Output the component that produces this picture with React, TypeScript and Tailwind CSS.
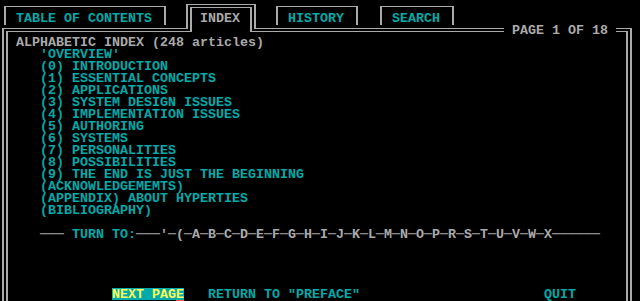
import React from 'react';

const LINE = 'border-[#aaaaaa]';
// text cell: 12px tall, glyphs pushed down to sit like the 8x12 DOS font
const CELL = 'h-[12px] pt-[2px] leading-[10px]';

const INDEX_ITEMS = [
  "'OVERVIEW'",
  '(0) INTRODUCTION',
  '(1) ESSENTIAL CONCEPTS',
  '(2) APPLICATIONS',
  '(3) SYSTEM DESIGN ISSUES',
  '(4) IMPLEMENTATION ISSUES',
  '(5) AUTHORING',
  '(6) SYSTEMS',
  '(7) PERSONALITIES',
  '(8) POSSIBILITIES',
  '(9) THE END IS JUST THE BEGINNING',
  '(ACKNOWLEDGEMEMTS)',
  '(APPENDIX) ABOUT HYPERTIES',
  '(BIBLIOGRAPHY)',
];

const LETTERS = 'ABCDEFGHIJKLMNOPRSTUVWX'.split('');

// every item sits on the 80x25 text-mode grid (8x12 cells)
const rowClass = [
  'row-[5/6]', 'row-[6/7]', 'row-[7/8]', 'row-[8/9]', 'row-[9/10]', 'row-[10/11]', 'row-[11/12]',
  'row-[12/13]', 'row-[13/14]', 'row-[14/15]', 'row-[15/16]', 'row-[16/17]', 'row-[17/18]', 'row-[18/19]',
];

const App = () => {
  const turnTo = "───'─(─" + LETTERS.join('─') + '──────';

  return (
    <div
      className="w-[640px] h-[301px] bg-black overflow-hidden grid grid-cols-[repeat(80,8px)] grid-rows-[repeat(24,12px)_13px] text-[13.333px] leading-[12px] font-bold whitespace-pre text-[#00aaaa]"
      style={{ fontFamily: '"Liberation Mono", "DejaVu Sans Mono", monospace' }}
    >
      {/* single-line tabs */}
      <div className="col-[1/22] row-[1/3]">
        <div className={`ml-[4px] mr-[2px] mt-[6px] h-[19px] border-t border-x-2 ${LINE}`} />
      </div>
      <div className={`col-[3/20] row-[2/3] ${CELL}`}>TABLE OF CONTENTS</div>

      <div className="col-[35/46] row-[1/3]">
        <div className={`ml-[4px] mr-[2px] mt-[6px] h-[19px] border-t border-x-2 ${LINE}`} />
      </div>
      <div className={`col-[37/44] row-[2/3] ${CELL}`}>HISTORY</div>

      <div className="col-[48/58] row-[1/3]">
        <div className={`ml-[4px] mr-[2px] mt-[6px] h-[19px] border-t border-x-2 ${LINE}`} />
      </div>
      <div className={`col-[50/56] row-[2/3] ${CELL}`}>SEARCH</div>

      {/* active tab, double line, open into the frame */}
      <div className="col-[24/33] row-[1/4]">
        <div className={`ml-[2px] mt-[4px] h-[25px] border-t border-x-2 ${LINE}`}>
          <div className={`mx-[2px] mt-[2px] h-[25px] border-t border-x-2 ${LINE}`} />
        </div>
      </div>
      <div className={`col-[26/31] row-[2/3] text-[#aaaaaa] ${CELL}`}>INDEX</div>

      {/* frame: left corner */}
      <div className="col-[1/25] row-[3/-1] flex flex-col">
        <div className={`ml-[2px] mr-[4px] mt-[4px] flex-1 border-t border-l-2 ${LINE}`} />
      </div>
      <div className="col-[1/25] row-[3/-1] flex flex-col">
        <div className={`ml-[6px] mt-[7px] flex-1 border-t border-l-2 ${LINE}`} />
      </div>

      {/* frame: top run between tab and page label */}
      <div className="col-[32/64] row-[3/4]">
        <div className={`ml-[6px] mt-[4px] border-t ${LINE}`} />
        <div className={`ml-[2px] mt-[2px] border-t ${LINE}`} />
      </div>
      <div className={`col-[65/77] row-[3/4] text-[#aaaaaa] ${CELL}`}>PAGE 1 OF 18</div>

      {/* frame: right corner */}
      <div className="col-[78/80] row-[3/-1] flex flex-col">
        <div className={`mt-[4px] flex-1 border-t border-r-2 ${LINE}`} />
      </div>
      <div className="col-[78/80] row-[3/-1] flex flex-col">
        <div className={`mr-[4px] mt-[7px] flex-1 border-t border-r-2 ${LINE}`} />
      </div>

      {/* content */}
      <div className={`col-[3/40] row-[4/5] text-[#aaaaaa] ${CELL}`}>ALPHABETIC INDEX (248 articles)</div>
      {INDEX_ITEMS.map((item, i) => (
        <div key={item} className={`col-[6/60] ${rowClass[i]} ${CELL}`}>{item}</div>
      ))}

      <div className={`col-[6/76] row-[20/21] text-[#aaaaaa] ${CELL}`}>
        ─── <span className="text-[#00aaaa]">TURN TO:</span>{turnTo}
      </div>

      {/* bottom command line */}
      <div className={`col-[15/24] row-[25/26] bg-[#00aaaa] text-[#ffff55] ${CELL}`}>NEXT PAGE</div>
      <div className="col-[23/24] row-[25/26] flex flex-col justify-end">
        <div className="h-[1px] bg-[#ff5555]" />
      </div>
      <div className={`col-[27/46] row-[25/26] ${CELL}`}>RETURN TO "PREFACE"</div>
      <div className={`col-[69/73] row-[25/26] ${CELL}`}>QUIT</div>
    </div>
  );
};

export default App;
